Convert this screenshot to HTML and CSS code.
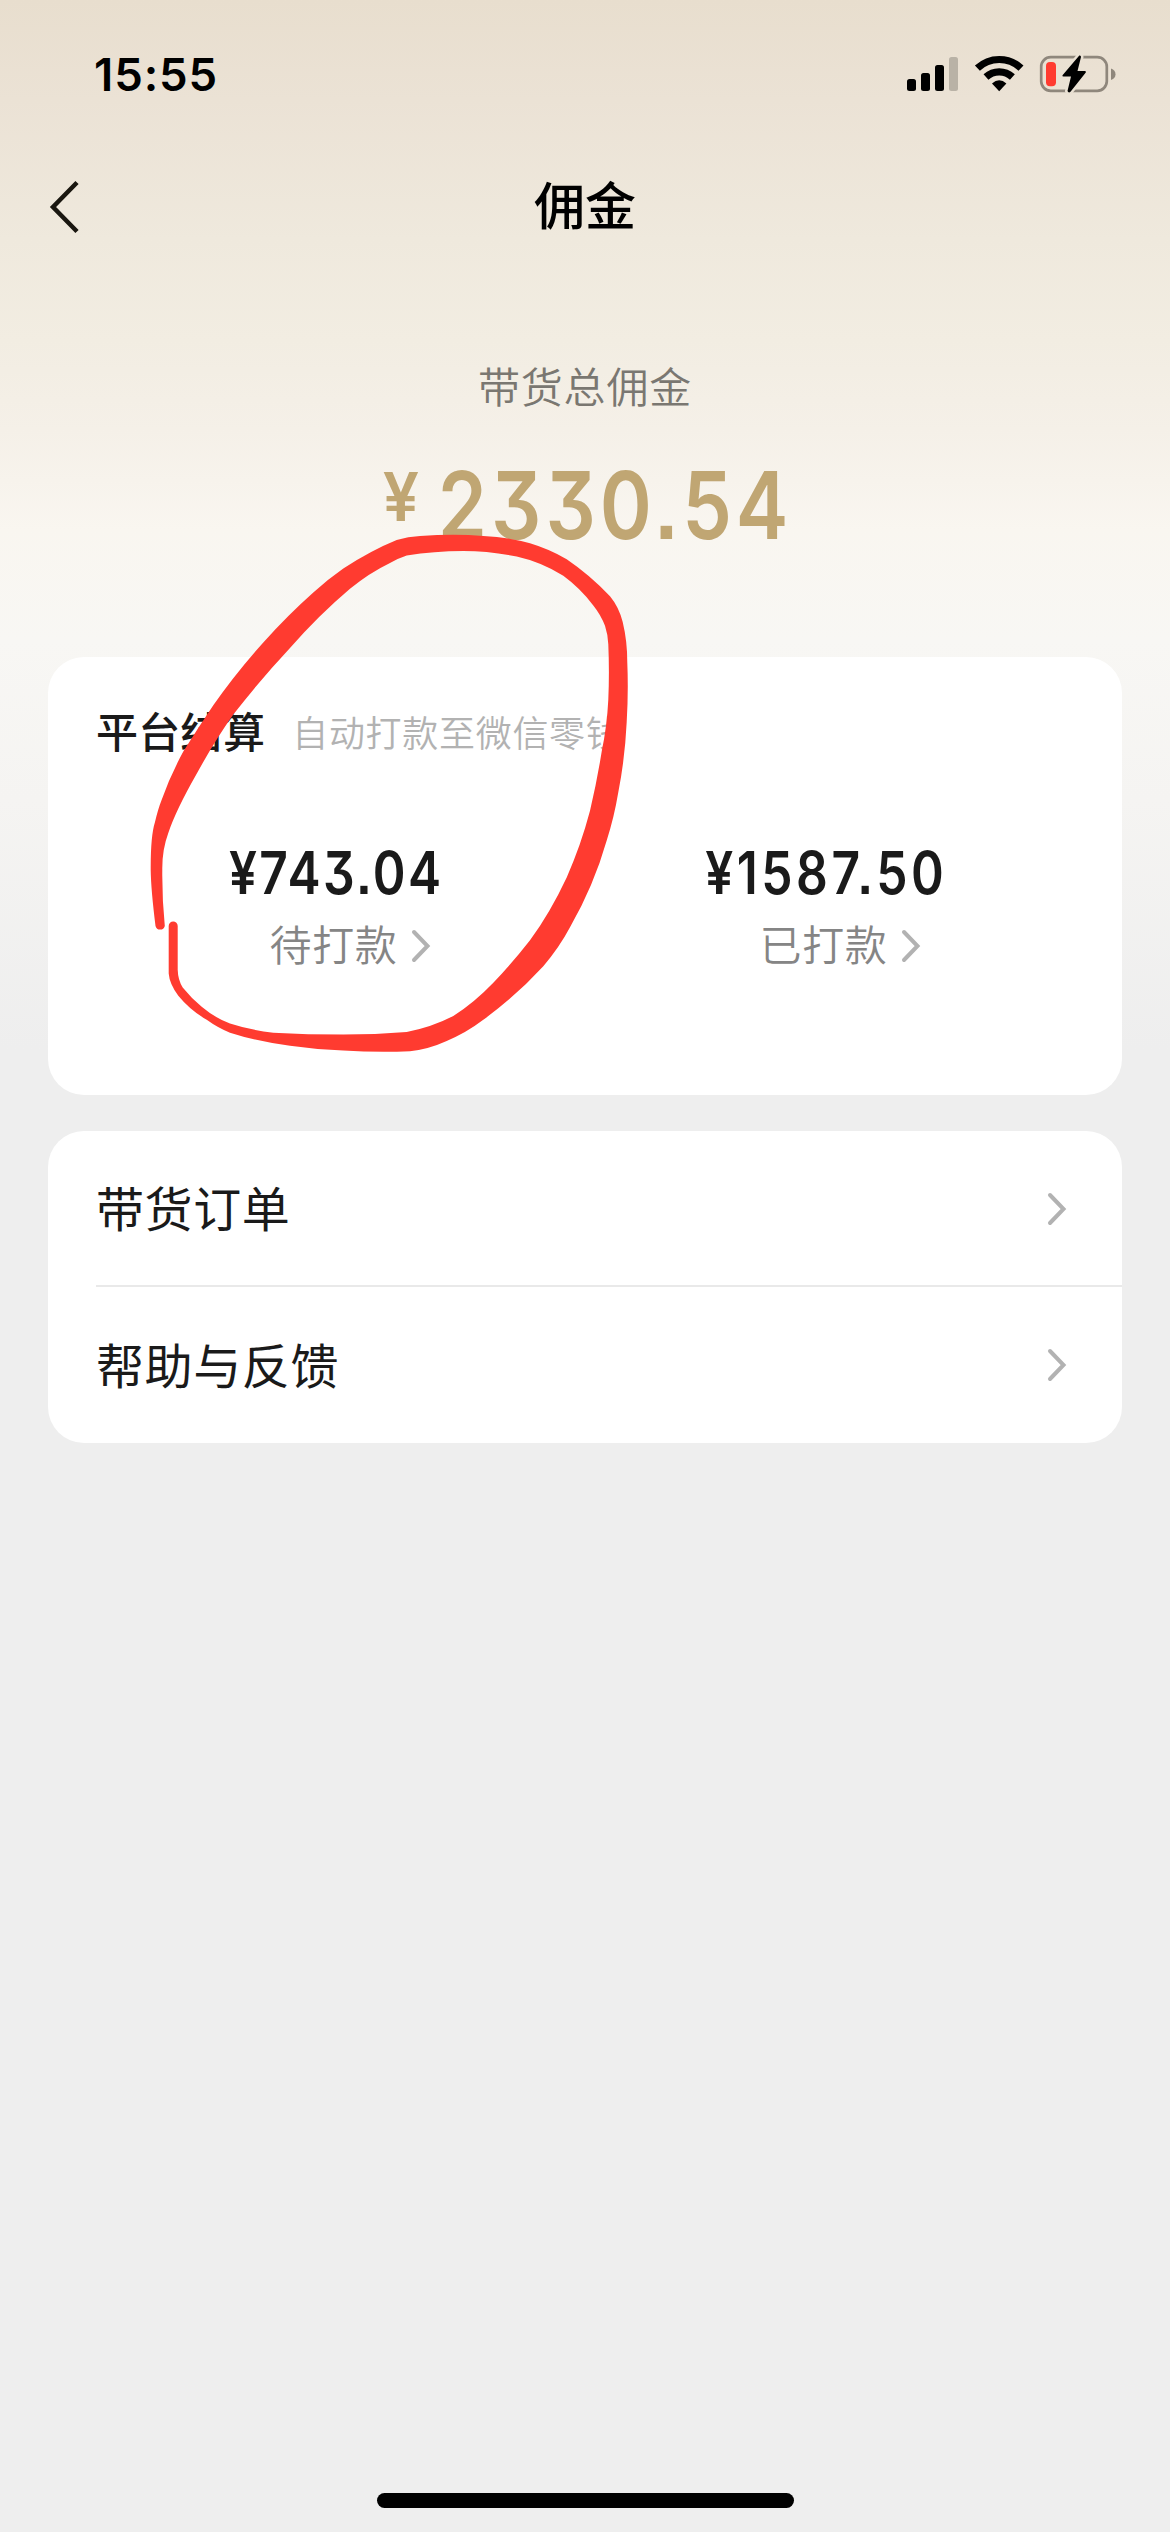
FILE: index.html
```html
<!DOCTYPE html>
<html lang="zh-CN">
<head>
<meta charset="utf-8">
<title>佣金</title>
<link rel="stylesheet" href="styles.css">
</head>
<body>
<div class="screen">
  <header class="statusbar">
    <span class="clock">15:55</span>
    <svg class="status-icons" width="212" height="42" viewBox="905 53 212 42">
      <rect x="907" y="79" width="9" height="12" rx="2.5"/>
      <rect x="921" y="73" width="9" height="18" rx="2.5"/>
      <rect x="935" y="65" width="9" height="26" rx="2.5"/>
      <rect x="949" y="57" width="9" height="34" rx="2.5" fill="#b9b2a6"/>
      <g fill="none" stroke="#000" stroke-width="7.2">
        <path d="M977.4 68.2A31.6 31.6 0 0 1 1021 68.2"/>
        <path d="M986 77A19.4 19.4 0 0 1 1012.400 77"/>
      </g>
      <path d="M999.200 91.200L992 83.600Q999.200 76.800 1006.400 83.600Z"/>
      <rect x="1041.200" y="57.200" width="65.600" height="33.600" rx="9.500" fill="none" stroke="#8f877c" stroke-width="2.700"/>
      <path d="M1111 68.500Q1115.500 70 1115.500 74.200T1111 80Z" fill="#8f877c"/>
      <rect x="1046" y="62" width="10" height="24.200" rx="4" fill="#ff3b30"/>
      <path d="M1079.300 55.500L1062.500 75.200Q1062 76.500 1063.500 76.500H1071L1067.500 91Q1068.500 93.300 1070.500 91.800L1085.800 72.500Q1086.300 71 1085 71H1077.500L1081 57Q1081 55 1079.300 55.500Z" stroke="#eae1d3" stroke-width="5" paint-order="stroke"/>
    </svg>
  </header>
  <nav class="navbar">
    <svg class="back" width="32" height="56" viewBox="0 0 32 56"><path d="M29 3.500L5 28L29 52.500"/></svg>
    <h1 class="title">佣金</h1>
    <span class="nav-space"></span>
  </nav>
  <section class="total">
    <p class="total-label">带货总佣金</p>
    <p class="total-amount"><span class="yen">¥</span><span class="digits">2330.54</span></p>
  </section>
  <section class="card settlement">
    <div class="card-head"><h2>平台结算</h2><span class="note">自动打款至微信零钱</span></div>
    <div class="columns">
      <div class="column">
        <div class="sum">¥743.04</div>
        <div class="state">待打款<svg class="chevron" width="20" height="36" viewBox="0 0 20 36"><path d="M3 4L16.500 18L3 32"/></svg></div>
      </div>
      <div class="column">
        <div class="sum sum-paid">¥1587.50</div>
        <div class="state">已打款<svg class="chevron" width="20" height="36" viewBox="0 0 20 36"><path d="M3 4L16.500 18L3 32"/></svg></div>
      </div>
    </div>
    <svg class="scribble" width="520" height="580" viewBox="130 500 520 580">
      <path d="M155.500 926Q151 890 150.700 870Q150.500 836 155 822Q158 809 161.700 799.700Q170 776 183.300 751.600Q198 728 213.300 705.300Q235 674 263.300 642.400Q288 615 313.300 592.500Q328 579 343.300 568.400Q372 550 396.700 540Q408 536.500 420 535.900Q455 533.500 483.300 535.900Q508 537 530 543.300Q549 549 566.700 559.200Q590 575 610 596.200Q619 607 622.700 622.100Q627.300 641 627.300 662.800Q628.500 692 626.700 722Q625 758 618.300 792.300Q614 818 606.700 840.400Q594 885 570 927.300Q559 948 543.300 966.200Q517 995 483.300 1019.800Q466 1033 446.700 1040.900Q429 1049 410 1051.200Q377 1052.500 343.300 1050.500Q316 1049.500 290 1045.700Q259 1042 230 1032.700Q218 1028 206.700 1019.800Q190 1010 178.300 995.700Q169.500 984 168.700 973.500V926A4.500 4.500 0 0 1 177.700 926V969.800Q178 980 182.700 987.600Q191 998 201.700 1006.800Q215 1018 230 1023.500Q250 1030 273.300 1032.700Q308 1034.600 343.300 1034.600Q375 1034.500 406.700 1032Q432 1027 453.300 1016Q474 1003 493.300 982.800Q513 962 530 940.200Q550 913 566.700 877.400Q581 845 590 810.800Q597 781 601.700 751.600Q607 726 608.300 699.800Q609.500 672 608.300 644.300Q608 635 605 625.800Q601 615 593.300 605.400Q580 588 563.300 575.800Q541 562 516.700 556.600Q490 551 463.300 551Q434 551 406.700 555.500Q399 558 390 562.900Q369 573 350 588.800Q319 615 290 648Q261 679 233.300 714.600Q214 742 196.700 773.800Q176 810 168.300 833Q162 850 162.300 870Q162 898 164.800 926A4.800 4.800 0 0 1 155.500 926Z"/>
    </svg>
  </section>
  <section class="card menu">
    <div class="row"><span>带货订单</span><svg class="chevron" width="20" height="36" viewBox="0 0 20 36"><path d="M3 4L16.500 18L3 32"/></svg></div>
    <div class="row"><span>帮助与反馈</span><svg class="chevron" width="20" height="36" viewBox="0 0 20 36"><path d="M3 4L16.500 18L3 32"/></svg></div>
  </section>
  <div class="home-indicator"></div>
</div>
</body>
</html>
```
FILE: styles.css
```css
* { box-sizing: border-box; margin: 0; padding: 0; }

body {
  width: 1170px;
  font-family: "Noto Sans CJK SC", sans-serif;
  color: #1a1a1a;
}

.screen {
  display: flex;
  flex-direction: column;
  width: 1170px;
  height: 2532px;
  background: linear-gradient(180deg, #e8dece 0, #ebe2d5 100px, #efe9dd 240px, #f2ede2 340px, #f5f0e8 430px, #f9f6f0 530px, #f8f7f4 640px, #f5f4f2 800px, #eee 1050px, #eee 100%);
}

.statusbar {
  display: flex;
  align-items: center;
  justify-content: space-between;
  height: 148px;
  padding: 0 53px 0 94px;
}

.clock {
  padding-top: 2px;
  font: 600 45.500px/60px Inter, sans-serif;
  letter-spacing: 0.900px;
  color: #000;
}

.navbar {
  display: flex;
  align-items: center;
  justify-content: space-between;
  height: 118px;
  padding: 0 48px;
}

.back { fill: none; stroke: #1a1710; stroke-width: 4.500; }
.nav-space { width: 32px; }

.title {
  padding-bottom: 8px;
  font-size: 51px;
  font-weight: 500;
  line-height: 70px;
  color: #000;
}

.total {
  display: flex;
  flex-direction: column;
  align-items: center;
  height: 391px;
  padding-top: 89px;
}

.total-label {
  font-size: 42px;
  line-height: 60px;
  letter-spacing: 0.800px;
  font-weight: 350;
  color: #7a7771;
}

.total-amount {
  display: flex;
  gap: 18px;
  height: 100px;
  margin-top: 40px;
  color: #c0a673;
  font-family: Inter, sans-serif;
  font-weight: 600;
  font-feature-settings: "cv09", "ss07";
}

.yen { font-size: 67px; line-height: 84px; transform: scaleX(0.96); }

/* The figures are condensed; the margins give back the width they free. */
.digits {
  margin: 0 -36px;
  font-size: 94px;
  line-height: 100px;
  letter-spacing: 4.800px;
  transform: translateX(2px) scaleX(0.84);
}

.card {
  margin: 0 48px;
  border-radius: 36px;
  background: #fff;
}

.settlement { position: relative; height: 438px; padding-top: 43px; }

.card-head {
  display: flex;
  align-items: center;
  gap: 27px;
  height: 60px;
  padding-left: 48px;
}

.card-head h2 { font-size: 42px; font-weight: 500; line-height: 60px; letter-spacing: 0.300px; }

.note {
  padding-top: 1px;
  font-size: 36px;
  font-weight: 350;
  letter-spacing: 0.700px;
  color: #b2b2b2;
}

.columns {
  display: grid;
  grid-template-columns: 490px 490px;
  padding: 77px 52px 0 42px;
}

.column { display: flex; flex-direction: column; align-items: center; }

.sum {
  font: 600 58.500px/72px Inter, sans-serif;
  font-feature-settings: "cv09", "ss07";
  letter-spacing: 2.800px;
  transform: translateX(1px) scaleX(0.85);
}

.sum-paid { letter-spacing: 4.100px; }

.state {
  display: flex;
  align-items: center;
  gap: 13px;
  margin-top: 4px;
  padding-left: 30px;
  font-size: 42px;
  font-weight: 350;
  line-height: 60px;
  letter-spacing: 0.700px;
  color: #858585;
}

.state .chevron { margin-top: 5px; }

.chevron { fill: none; stroke: #b2b2b2; stroke-width: 4; stroke-linecap: round; }

.scribble {
  position: absolute;
  left: 82px;
  top: -157px;
  fill: #ff3b30;
}

.menu { height: 312px; margin-top: 36px; }

.row {
  display: flex;
  align-items: center;
  justify-content: space-between;
  height: 156px;
  margin-left: 48px;
  padding-right: 55px;
  font-size: 48px;
  letter-spacing: 0.600px;
}

.row span { padding-bottom: 4px; }

.row:first-child { border-bottom: 2px solid #e9e9e9; }
.row:first-child .chevron { margin-top: 2px; }

.home-indicator {
  width: 417px;
  height: 15px;
  margin: auto auto 24px;
  border-radius: 8px;
  background: #000;
}
```
